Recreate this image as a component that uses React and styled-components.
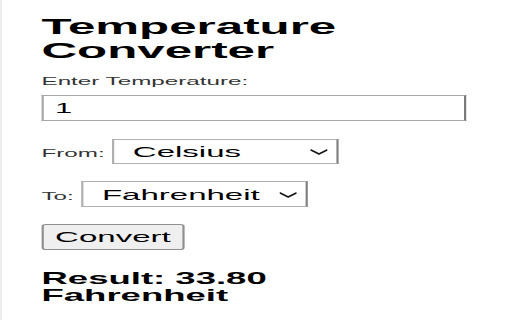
import React from 'react';
import styled, { createGlobalStyle } from 'styled-components';

const SX = 2.2;

const Global = createGlobalStyle`
  html, body { margin: 0; padding: 0; background: #fff; overflow: hidden; }
  body { width: 512px; height: 320px; font-family: "Liberation Sans", Arial, sans-serif; }
`;

const Frame = styled.div`
  width: 512px;
  height: 320px;
  box-sizing: border-box;
  border-left: 2px solid #ededed;
  overflow: hidden;
`;

const Stage = styled.div`
  width: ${510 / SX}px;
  transform: scaleX(${SX});
  transform-origin: 0 0;
  box-sizing: border-box;
  padding: 14.5px 0 0 ${39.5 / SX}px;
  display: flex;
  flex-direction: column;
  align-items: flex-start;
`;

const Title = styled.h1`
  margin: 0;
  font-size: 22.4px;
  line-height: 24px;
  font-weight: bold;
  color: #000;
`;

const FieldLabel = styled.label`
  margin-top: 12.5px;
  font-size: 11px;
  line-height: 12.6px;
  color: #333;
`;

const TextInput = styled.input`
  margin: 7.3px 0 0 0;
  width: ${425 / SX}px;
  height: 26px;
  box-sizing: border-box;
  border: 1px solid #a8a8a8;
  border-right-color: #7a7a7a;
  border-radius: 0;
  padding: 0 0 0 5.2px;
  font-family: inherit;
  font-size: 14px;
  color: #000;
  background: #fff;
  outline: none;
`;

const Row = styled.div`
  display: flex;
  align-items: baseline;
  gap: 3.6px;
  margin-top: ${(p) => p.$top}px;
`;

const SmallLabel = styled.span`
  font-size: 11px;
  color: #333;
`;

const SelectWrap = styled.div`
  position: relative;
  display: inline-block;
`;

const Select = styled.select`
  appearance: none;
  -webkit-appearance: none;
  width: ${225 / SX}px;
  height: 25.5px;
  box-sizing: border-box;
  border: 1px solid #b0b0b0;
  border-right-color: #808080;
  border-radius: 0;
  padding: 0 0 0 8.2px;
  font-family: inherit;
  font-size: 15px;
  color: #000;
  background: #fff;
  outline: none;
`;

const Chevron = styled.svg`
  position: absolute;
  right: ${10 / SX}px;
  top: 50%;
  width: ${18 / SX}px;
  height: 6px;
  margin-top: -2.5px;
  pointer-events: none;
`;

const Button = styled.button`
  margin-top: 17px;
  height: 26px;
  box-sizing: border-box;
  padding: 0 5.2px;
  font-family: inherit;
  font-size: 15px;
  color: #000;
  background: #efefef;
  border: 1px solid #8f8f8f;
  border-radius: 2px;
`;

const Result = styled.div`
  margin-top: 21.5px;
  font-size: 16.6px;
  line-height: 16.5px;
  font-weight: bold;
  color: #000;
  max-width: 150px;
`;

const UnitSelect = ({ value }) => (
  <SelectWrap>
    <Select defaultValue={value}>
      <option value="Celsius">Celsius</option>
      <option value="Fahrenheit">Fahrenheit</option>
      <option value="Kelvin">Kelvin</option>
    </Select>
    <Chevron viewBox="0 0 18 6" preserveAspectRatio="none">
      <path d="M1 1 L9 5 L17 1" fill="none" stroke="#111" strokeWidth="1.5" strokeLinejoin="round" strokeLinecap="round" />
    </Chevron>
  </SelectWrap>
);

export default function App() {
  return (
    <>
      <Global />
      <Frame>
        <Stage>
          <Title>Temperature Converter</Title>
          <FieldLabel htmlFor="temp">Enter Temperature:</FieldLabel>
          <TextInput id="temp" type="text" defaultValue="1" />
          <Row $top={18}>
            <SmallLabel>From:</SmallLabel>
            <UnitSelect value="Celsius" />
          </Row>
          <Row $top={17}>
            <SmallLabel>To:</SmallLabel>
            <UnitSelect value="Fahrenheit" />
          </Row>
          <Button type="button">Convert</Button>
          <Result>Result: 33.80 Fahrenheit</Result>
        </Stage>
      </Frame>
    </>
  );
}
